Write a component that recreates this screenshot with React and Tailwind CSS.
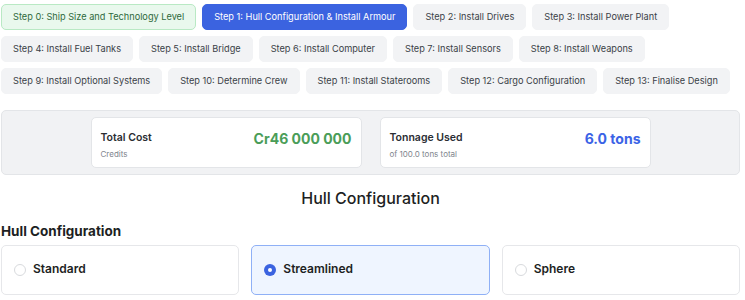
import React from 'react';

const steps = [
  'Step 0: Ship Size and Technology Level',
  'Step 1: Hull Configuration & Install Armour',
  'Step 2: Install Drives',
  'Step 3: Install Power Plant',
  'Step 4: Install Fuel Tanks',
  'Step 5: Install Bridge',
  'Step 6: Install Computer',
  'Step 7: Install Sensors',
  'Step 8: Install Weapons',
  'Step 9: Install Optional Systems',
  'Step 10: Determine Crew',
  'Step 11: Install Staterooms',
  'Step 12: Cargo Configuration',
  'Step 13: Finalise Design',
];

const hulls = ['Standard', 'Streamlined', 'Sphere'];

const StepButton = ({ label, index }) => {
  let cls = 'bg-[#f2f3f5] border-[#f2f3f5] text-[#3a3f47]';
  if (index === 0) cls = 'bg-[#e9f8ed] border-[#b9e9c4] text-[#2f6a3c]';
  if (index === 1) cls = 'bg-[#3b63e0] border-[#3b63e0] text-white';
  return (
    <button className={`h-[26px] px-[11px] rounded-[5px] border text-[9.2px] leading-none whitespace-nowrap ${cls}`}>
      {label}
    </button>
  );
};

const StatCard = ({ title, sub, value, color }) => (
  <div className="w-[271px] h-[51px] bg-white border border-[#e3e5e8] rounded-[5px] px-[9px] pt-[15px] flex items-start justify-between">
    <div className="flex flex-col">
      <span className="text-[10.5px] font-semibold text-[#2a2d33] leading-none">{title}</span>
      <span className="text-[8px] text-[#80858d] leading-none mt-[6px]">{sub}</span>
    </div>
    <span className={`text-[14px] font-bold leading-none -mt-[1px] ${color}`}>{value}</span>
  </div>
);

export default function App() {
  const selected = 1;
  return (
    <div className="w-[745px] h-[300px] overflow-hidden bg-white pl-[1px] pr-[5px] pt-[4px]" style={{ fontFamily: 'Inter, "Noto Sans", sans-serif' }}>
      <div className="flex flex-wrap gap-[6px]">
        {steps.map((s, i) => (
          <StepButton key={s} label={s} index={i} />
        ))}
      </div>

      <div className="mt-[16px] h-[65px] bg-[#f1f2f4] border border-[#e3e5e8] rounded-[5px] flex items-center justify-center gap-[18px]">
        <StatCard title="Total Cost" sub="Credits" value="Cr46 000 000" color="text-[#4a9d58]" />
        <StatCard title="Tonnage Used" sub="of 100.0 tons total" value="6.0 tons" color="text-[#3b63e6]" />
      </div>

      <h2 className="mt-[15px] text-center text-[16px] font-medium text-[#1d1f23] leading-none">Hull Configuration</h2>

      <h3 className="mt-[19px] text-[13.5px] font-bold text-[#1d1f23] leading-none">Hull Configuration</h3>

      <div className="mt-[6px] grid grid-cols-3 gap-[12px]">
        {hulls.map((h, i) => (
          <div
            key={h}
            className={`h-[50px] rounded-[5px] border flex items-center px-[12px] gap-[7px] ${
              i === selected ? 'bg-[#eff5ff] border-[#8fb0f6]' : 'bg-white border-[#e6e7ea]'
            }`}
          >
            {i === selected ? (
              <span className="w-[12px] h-[12px] rounded-full bg-[#3b63e0] flex items-center justify-center">
                <span className="w-[4px] h-[4px] rounded-full bg-white" />
              </span>
            ) : (
              <span className="w-[12px] h-[12px] rounded-full border border-[#d8dadd] bg-white" />
            )}
            <span className="text-[12px] font-semibold text-[#1d1f23] -mt-[1px]">{h}</span>
          </div>
        ))}
      </div>
    </div>
  );
}
